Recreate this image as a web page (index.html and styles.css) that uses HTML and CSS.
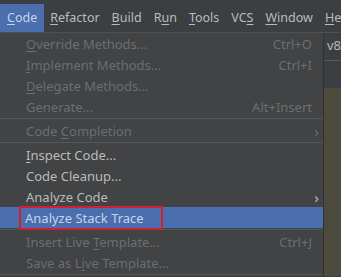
FILE: index.html
```html
<!DOCTYPE html>
<html>
<head>
    <title>Code menu</title>
    <link rel="stylesheet" href="styles.css">
</head>
<body>
    <div class="menubar">
        <span class="top active"><u>C</u>ode</span>
        <span class="top"><u>R</u>efactor</span>
        <span class="top"><u>B</u>uild</span>
        <span class="top">R<u>u</u>n</span>
        <span class="top"><u>T</u>ools</span>
        <span class="top">VC<u>S</u></span>
        <span class="top"><u>W</u>indow</span>
        <span class="top"><u>H</u>elp</span>
    </div>

    <div class="workspace">
        <div class="menu">
            <div class="item disabled"><span><u>O</u>verride Methods...</span><span class="key">Ctrl+O</span></div>
            <div class="item disabled"><span><u>I</u>mplement Methods...</span><span class="key">Ctrl+I</span></div>
            <div class="item disabled"><span><u>D</u>elegate Methods...</span></div>
            <div class="item disabled"><span>Generate...</span><span class="key">Alt+Insert</span></div>
            <div class="sep"></div>
            <div class="item disabled"><span>Code <u>C</u>ompletion</span><span class="arrow">&#x203A;</span></div>
            <div class="sep"></div>
            <div class="item"><span><u>I</u>nspect Code...</span></div>
            <div class="item"><span>Code Cleanup...</span></div>
            <div class="item"><span>Analyze Code</span><span class="arrow">&#x203A;</span></div>
            <div class="item selected"><span class="marked">Analyze Stack Trace</span></div>
            <div class="sep"></div>
            <div class="item disabled"><span>Insert Live <u>T</u>emplate...</span><span class="key">Ctrl+J</span></div>
            <div class="item disabled"><span>Save as L<u>i</u>ve Template...</span></div>
            <div class="sep"></div>
        </div>
        <div class="editor">
            <div class="tab">v8</div>
            <div class="gutter"></div>
            <div class="code"></div>
        </div>
    </div>
</body>
</html>
```

FILE: styles.css
```css
body {
    margin: 0;
    width: 341px;
    height: 277px;
    overflow: hidden;
    background: #3c3f41;
    font-family: "Noto Sans", "Open Sans", sans-serif;
    font-size: 13px;
}
u {
    text-decoration: underline;
    text-underline-offset: 2px;
}
.menubar {
    display: flex;
    height: 28px;
    padding-top: 4px;
    background: #3c3f41;
    border-bottom: 1px solid #4e5052;
    white-space: nowrap;
    overflow: hidden;
}
.top {
    padding: 0 6px;
    line-height: 28px;
    font-size: 12.5px;
    color: #bbbbbb;
}
.top.active {
    background: #4b6eaf;
    color: #c9d4e6;
    padding: 0 7px;
}
.workspace {
    display: flex;
}
.menu {
    width: 324px;
    background: #414345;
    border-right: 1px solid #2f3133;
}
.item {
    display: flex;
    align-items: center;
    height: 21px;
    padding: 0 11px 0 26px;
    color: #bbbbbb;
    white-space: nowrap;
}
.item.disabled {
    color: #6c6e70;
}
.item .key {
    margin-left: auto;
}
.item .arrow {
    margin-left: auto;
    margin-right: -7px;
    font-size: 15px;
}
.item.selected {
    background: #4b6eaf;
    color: #c8d3e6;
}
.marked {
    margin-left: -5px;
    padding: 1px 4px;
    outline: 2px solid #d1202f;
    width: 132px;
}
.sep {
    height: 1px;
    margin: 1px 0;
    background: #55585a;
}
.editor {
    flex: 1;
    display: flex;
    flex-direction: column;
}
.tab {
    height: 27px;
    padding-left: 3px;
    line-height: 24px;
    color: #bbbbbb;
    background: #3c3f41;
    border-bottom: 1px solid #555759;
}
.gutter {
    height: 27px;
    background: #3c3f41;
}
.code {
    flex: 1;
    background: #4b4a3d;
}
```
